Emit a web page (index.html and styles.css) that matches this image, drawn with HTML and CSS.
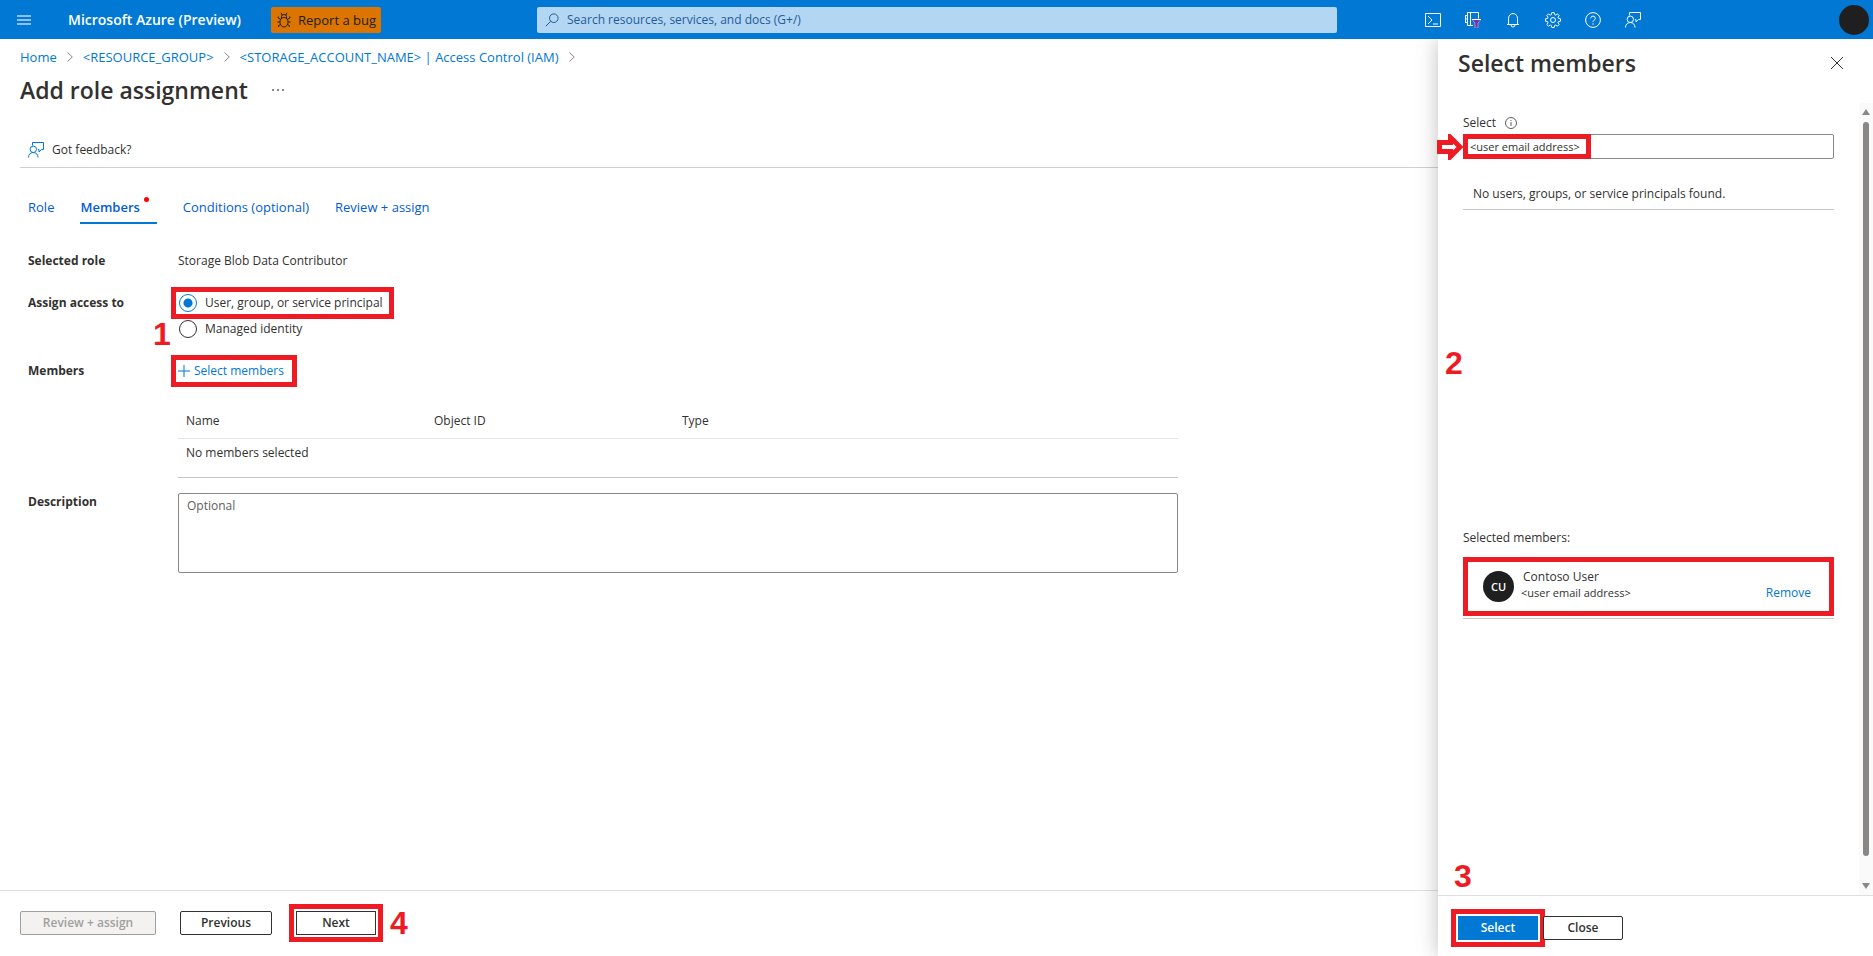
FILE: index.html
```html
<!DOCTYPE html>
<html lang="en">
<head>
  <meta charset="UTF-8">
  <meta name="viewport" content="width=device-width, initial-scale=1.0">
  <title>Add role assignment - Microsoft Azure</title>
  <link rel="stylesheet" href="styles.css">
</head>
<body>
  <svg class="defs" aria-hidden="true">
    <symbol id="feedback" viewBox="0 0 16 16">
      <path d="M4.500 3.500V.5h11v7h-2l-2.500 2.500V7.500H10M.5 15.500c0-3 2-5 4.800-5s4.700 2 4.700 5" />
      <circle cx="5.300" cy="7.300" r="3.200" />
    </symbol>
    <symbol id="chevron" viewBox="0 0 6 10">
      <path d="M.5.500L5.300 5 .5 9.500" />
    </symbol>
  </svg>

  <header class="topbar">
    <button class="menu" aria-label="Show portal menu"><span></span><span></span><span></span></button>
    <a class="brand" href="#">Microsoft Azure (Preview)</a>
    <button class="bug">
      <svg viewBox="0 0 14 16" width="14" height="16">
        <path d="M7 5.500c2.800 0 4 2 4 4.500s-1.500 5-4 5-4-2.500-4-5 1.200-4.500 4-4.500zM4.500 6V4.500a2.500 2 0 0 1 5 0V6M5.200 3L4 .8M8.800 3L10 .8M3.500 7.200L1.200 6V4.500M10.500 7.200L12.800 6V4.500M3 10H.5M11 10h2.500M3.700 12.500l-2 1V15M10.300 12.500l2 1V15" />
      </svg>
      Report a bug
    </button>
    <div class="search">
      <svg viewBox="0 0 14 14" width="14" height="14"><circle cx="8.800" cy="5.200" r="4.300" /><path d="M5.700 8.300L.8 13.200" /></svg>
      <input type="text" aria-label="Search" placeholder="Search resources, services, and docs (G+/)">
    </div>
    <nav class="tools">
      <button aria-label="Cloud Shell">
        <svg viewBox="0 0 16 16" width="16" height="16"><path d="M.5 1.500h15v13H.5zM3 4l4 4-4 4M8 12h5" /></svg>
      </button>
      <button aria-label="Directories and subscriptions">
        <svg viewBox="0 0 16 16" width="16" height="16">
          <path d="M8 13.500H2.500V.5h11v6M5.500.5v13M.5 3.500h2M.5 7h2M.5 10.500h2M.5 3v8" />
          <path class="funnel" d="M7 7.500h9l-3 3.500v5h-3v-5z" />
          <path d="M7 7.500h9" />
        </svg>
      </button>
      <button aria-label="Notifications">
        <svg viewBox="0 0 16 16" width="16" height="16"><path d="M3.500 12.500V6.500a4.500 5 0 0 1 9 0v6M2 12.500h12M6 13a2 2 0 0 0 4 0" /></svg>
      </button>
      <button aria-label="Settings">
        <svg viewBox="0 0 16 16" width="16" height="16">
          <path d="M6.800.6h2.400l.4 2 1.200.5 1.700-1.200 1.700 1.700L13 5.200l.5 1.200 2 .4v2.400l-2 .4-.5 1.200 1.200 1.700-1.700 1.700-1.700-1.200-1.200.5-.4 2H6.800l-.4-2-1.200-.5-1.700 1.200-1.700-1.700L3 10.800l-.5-1.200-2-.4V6.800l2-.4L3 5.200 1.800 3.600l1.700-1.700 1.700 1.200 1.200-.5z" />
          <circle cx="8" cy="8" r="2.500" />
        </svg>
      </button>
      <button aria-label="Help">
        <svg viewBox="0 0 16 16" width="16" height="16"><circle cx="8" cy="8" r="7.400" /><path class="mark" d="M5.700 6.300a2.300 2.200 0 1 1 3.500 1.900C8.300 8.800 8 9.100 8 10M8 11.300v1.400" /></svg>
      </button>
      <button aria-label="Feedback"><svg width="16" height="16"><use href="#feedback" /></svg></button>
    </nav>
    <button class="account" aria-label="Account"></button>
  </header>

  <div class="page">
    <main class="blade">
      <nav class="crumbs" aria-label="Breadcrumb">
        <a href="#">Home</a>
        <svg width="6" height="10"><use href="#chevron" /></svg>
        <a href="#">&lt;RESOURCE_GROUP&gt;</a>
        <svg width="6" height="10"><use href="#chevron" /></svg>
        <a href="#">&lt;STORAGE_ACCOUNT_NAME&gt; | Access Control (IAM)</a>
        <svg width="6" height="10"><use href="#chevron" /></svg>
      </nav>
      <div class="title">
        <h1>Add role assignment</h1>
        <button class="more" aria-label="More"><span></span><span></span><span></span></button>
      </div>
      <div class="commands">
        <button><svg width="16" height="16"><use href="#feedback" /></svg>Got feedback?</button>
      </div>
      <nav class="tabs">
        <a href="#">Role</a>
        <a class="active" href="#">Members</a>
        <a href="#">Conditions (optional)</a>
        <a href="#">Review + assign</a>
      </nav>

      <form class="form" id="assignment">
        <div class="row">
          <span class="label">Selected role</span>
          <span>Storage Blob Data Contributor</span>
        </div>
        <div class="row" role="radiogroup" aria-labelledby="access">
          <span class="label" id="access">Assign access to</span>
          <div class="options">
            <span class="step step-1">1</span>
            <label class="callout"><input type="radio" name="access" checked>User, group, or service principal</label>
            <label><input type="radio" name="access">Managed identity</label>
          </div>
        </div>
        <div class="row">
          <span class="label">Members</span>
          <button class="add callout" type="button">
            <svg viewBox="0 0 12 12" width="12" height="12"><path d="M6 0v12M0 6h12" /></svg>Select members
          </button>
        </div>
        <table class="members">
          <thead>
            <tr><th>Name</th><th>Object ID</th><th>Type</th></tr>
          </thead>
          <tbody>
            <tr><td colspan="3">No members selected</td></tr>
          </tbody>
        </table>
        <div class="row">
          <label class="label" for="description">Description</label>
          <textarea id="description" placeholder="Optional"></textarea>
        </div>
      </form>

      <footer class="actions">
        <button class="btn wide" disabled>Review + assign</button>
        <button class="btn prev">Previous</button>
        <button class="btn callout">Next</button>
        <span class="step">4</span>
      </footer>
    </main>

    <aside class="panel">
      <div class="panel-head">
        <h2>Select members</h2>
        <button class="close" aria-label="Close">
          <svg viewBox="0 0 12 12" width="12" height="12"><path d="M0 0l12 12M12 0L0 12" /></svg>
        </button>
      </div>
      <div class="panel-scroll">
        <div class="panel-body">
          <label class="field-label" for="member">Select
            <svg viewBox="0 0 12 12" width="12" height="12"><circle cx="6" cy="6" r="5.500" /><path d="M6 5v4M6 3v1" /></svg>
          </label>
          <div class="field">
            <svg class="arrow" viewBox="0 0 26 26" width="26" height="26"><path d="M2.500 8.500h11V3.500L23 13l-9.500 9.500v-5h-11z" /></svg>
            <span class="field-mark"></span>
            <input id="member" type="text" value="&lt;user email address&gt;">
          </div>
          <p class="empty">No users, groups, or service principals found.</p>
          <div class="results"><span class="step step-2">2</span></div>
          <p class="selected-label">Selected members:</p>
          <div class="selected">
            <div class="person">
              <span class="initials">CU</span>
              <div class="details">
                <span class="name">Contoso User</span>
                <span class="mail">&lt;user email address&gt;</span>
              </div>
              <a class="remove" href="#">Remove</a>
            </div>
          </div>
        </div>
        <div class="scrollbar" aria-hidden="true">
          <svg viewBox="0 0 8 6" width="8" height="6"><path d="M4 0l4 6H0z" /></svg>
          <span class="thumb"></span>
          <svg viewBox="0 0 8 6" width="8" height="6"><path d="M0 0h8L4 6z" /></svg>
        </div>
      </div>
      <footer class="panel-actions">
        <span class="step step-3">3</span>
        <button class="btn primary callout">Select</button>
        <button class="btn">Close</button>
      </footer>
    </aside>
  </div>
</body>
</html>
```

FILE: styles.css
```css
* {
  box-sizing: border-box;
  margin: 0;
  padding: 0;
}
html, body {height: 100%;}
body {
  display: flex;
  flex-direction: column;
  overflow: hidden;
  background: #fff;
  color: #323130;
  font: 12px/18px "Open Sans", "Noto Sans", sans-serif;
}
button, input, textarea {
  font: inherit;
  color: inherit;
}
button {
  border: 0;
  background: none;
}
a {
  color: #0078d4;
  text-decoration: none;
}
svg {
  flex: none;
  fill: none;
  stroke: currentColor;
}
.defs {
  position: absolute;
  width: 0;
  height: 0;
}

/* top bar */
.topbar {
  display: flex;
  align-items: center;
  height: 39px;
  flex: none;
  padding: 0 4px 0 17px;
  background: #0078d4;
  color: #fff;
}
.menu {
  display: grid;
  gap: 2px;
  width: 14px;
  margin-right: 37px;
}
.menu span {
  height: 2px;
  background: #8cc1ec;
}
.brand {
  width: 203px;
  color: #fff;
  font-size: 14px;
  font-weight: 600;
  white-space: nowrap;
}
.bug {
  display: flex;
  align-items: center;
  gap: 7px;
  width: 110px;
  height: 26px;
  padding-left: 6px;
  border-radius: 2px;
  background: #db7500;
  color: #201f1e;
  font-size: 13px;
  white-space: nowrap;
}
.search {
  display: flex;
  align-items: center;
  gap: 8px;
  flex: 0 1 800px;
  height: 26px;
  margin-left: 156px;
  padding: 0 8px;
  border-radius: 2px;
  background: #b3d6f2;
  color: #1f5c99;
}
.search input {
  flex: 1;
  border: 0;
  background: none;
}
.search input::placeholder {color: #1f5c99;}
.tools {
  display: flex;
  margin-left: 76px;
}
.tools button {
  display: grid;
  place-items: center;
  width: 40px;
  height: 38px;
}
.funnel {
  fill: #7f2aa8;
  stroke: #e6d8f2;
  stroke-width: 0.5px;
}
.account {
  width: 30px;
  height: 30px;
  margin-left: auto;
  border-radius: 50%;
  background: #1f1f1f;
}

/* blade */
.page {
  display: flex;
  flex: 1;
  min-height: 0;
}
.blade {
  display: flex;
  flex-direction: column;
  flex: 1;
  min-width: 0;
}
.crumbs {
  display: flex;
  align-items: center;
  gap: 10px;
  padding: 9px 20px 0;
  font-size: 13px;
}
.crumbs svg {color: #8a8886;}
.title {
  display: flex;
  align-items: center;
  gap: 24px;
  padding: 8px 20px 0;
}
h1, h2 {
  font-size: 23px;
  line-height: 32px;
  font-weight: 600;
}
.more {
  display: flex;
  gap: 3px;
}
.more span {
  width: 2px;
  height: 2px;
  background: #8a8886;
}
.commands {
  margin-left: 20px;
  padding: 35px 8px 8px;
  border-bottom: 1px solid #d2d0ce;
}
.commands button {
  display: flex;
  align-items: center;
  gap: 8px;
}
.commands svg {color: #0078d4;}
.tabs {
  display: flex;
  gap: 26px;
  padding: 27px 28px 0;
  font-size: 13px;
}
.tabs a {
  position: relative;
  height: 29px;
  color: #015cda;
  line-height: 24px;
}
.tabs .active {
  padding-right: 17px;
  border-bottom: 2px solid #0078d4;
  font-weight: 600;
}
.tabs .active::after {
  content: "";
  position: absolute;
  top: 2px;
  right: 8px;
  width: 5px;
  height: 5px;
  border-radius: 50%;
  background: #f00;
}

.form {
  flex: 1;
  padding: 28px 28px 0;
}
.row {
  display: grid;
  grid-template-columns: 150px minmax(0, 1000px);
  justify-items: start;
  margin-bottom: 24px;
}
.label {font-weight: 700;}
.options {
  position: relative;
  display: grid;
  gap: 8px;
  justify-items: start;
}
.options label {
  display: flex;
  align-items: center;
  gap: 8px;
}
.options input {
  appearance: none;
  width: 18px;
  height: 18px;
  margin-left: 1px;
  border: 1px solid #323130;
  border-radius: 50%;
}
.options input:checked {
  border-color: #0078d4;
  background: radial-gradient(circle, #0078d4 4px, transparent 5px);
}
.options .callout {padding-right: 4px;}
.add {
  display: flex;
  align-items: center;
  gap: 4px;
  padding-right: 6px;
  color: #0078d4;
}
.members {
  width: calc(100% - 150px);
  max-width: 1000px;
  margin-left: 150px;
  table-layout: fixed;
  border-collapse: collapse;
  border-bottom: 1px solid #c8c6c4;
  text-align: left;
}
.members th {
  width: 248px;
  padding: 8px;
  border-bottom: 1px solid #e6e6e6;
  font-weight: 500;
}
.members th:last-child {width: auto;}
.members td {padding: 5px 8px 15px;}
.form textarea {
  display: block;
  width: 100%;
  height: 80px;
  padding: 3px 8px;
  border: 1px solid #8a8886;
  border-radius: 2px;
  resize: none;
}
.members + .row {margin-top: 15px;}
textarea::placeholder {color: #605e5c;}

/* buttons */
.btn {
  min-width: 80px;
  height: 24px;
  border: 1px solid #323130;
  border-radius: 2px;
  background: #fff;
  font-weight: 600;
  line-height: 20px;
}
.btn:disabled {
  border-color: #a19f9d;
  background: #f3f2f1;
  color: #a19f9d;
}
.primary {
  border-color: #0078d4;
  background: #0078d4;
  color: #fff;
}
.wide {width: 136px;}
.prev {width: 92px;}
.actions {
  display: flex;
  align-items: center;
  gap: 24px;
  height: 66px;
  padding: 0 20px 2px;
  border-top: 1px solid #e1dfdd;
}
.actions .step {margin-left: -10px;}

/* numbered steps and frames */
.step {
  color: #ed1c24;
  font: bold 32px/32px "Liberation Sans", Arial, sans-serif;
}
.step-1, .step-2, .step-3 {position: absolute;}
.step-1 {
  top: 24px;
  left: -25px;
}
.step-2 {
  bottom: 150px;
  left: -18px;
}
.step-3 {
  top: -36px;
  left: 16px;
}
.callout {
  border-radius: 0;
  outline: 5px solid #ed1c24;
  outline-offset: 2px;
}

/* side panel */
.panel {
  display: flex;
  flex-direction: column;
  flex: 0 0 435px;
  background: #fff;
  box-shadow: 0 0 20px rgba(0, 0, 0, 0.25);
  clip-path: inset(0 0 0 -40px);
}
.panel-head {
  display: flex;
  align-items: center;
  justify-content: space-between;
  padding: 8px 30px 0 20px;
}
.close {
  display: flex;
}
.panel-scroll {
  display: flex;
  flex: 1;
  margin-top: 24px;
}
.panel-body {
  flex: 1;
  padding: 11px 25px 0;
}
.field-label {
  display: flex;
  align-items: center;
  gap: 9px;
}
.field-label svg {color: #605e5c;}
.field {
  position: relative;
  margin-top: 2px;
}
.field input {
  display: block;
  width: 100%;
  height: 25px;
  padding: 0 6px;
  border: 1px solid #8a8886;
  border-radius: 2px;
}
.field input, .mail {font-size: 11px;}
.field-mark {
  position: absolute;
  top: 0;
  left: 0;
  width: 128px;
  height: 25px;
  border: 5px solid #ed1c24;
}
.arrow {
  position: absolute;
  left: -26px;
  color: #ed1c24;
  fill: #fff;
  stroke-width: 5px;
}
.empty {
  padding: 26px 10px 6px;
  border-bottom: 1px solid #c8c6c4;
}
.results {
  position: relative;
  height: 319px;
}
.selected {
  margin-top: 10px;
  padding-bottom: 2px;
  border-bottom: 1px solid #c8c6c4;
}
.person {
  display: flex;
  align-items: center;
  gap: 7px;
  height: 59px;
  padding: 0 18px 0 15px;
  border: 5px solid #ed1c24;
}
.initials {
  width: 31px;
  height: 31px;
  border-radius: 50%;
  background: #1f1f1f;
  color: #fff;
  font-size: 11px;
  font-weight: 600;
  line-height: 31px;
  text-align: center;
}
.details {
  display: grid;
  flex: 1;
  padding-bottom: 4px;
  line-height: 16px;
}
.name {padding-left: 2px;}
.remove {padding-top: 13px;}
.scrollbar {
  display: flex;
  flex-direction: column;
  align-items: center;
  gap: 7px;
  width: 14px;
  padding: 6px 0;
  background: #fafafa;
}
.scrollbar svg {
  fill: #8a8886;
  stroke: none;
}
.thumb {
  flex: 1;
  width: 6px;
  margin-bottom: 20px;
  border-radius: 3px;
  background: #8a8886;
}
.panel-actions {
  position: relative;
  display: flex;
  align-items: center;
  gap: 5px;
  height: 61px;
  padding: 4px 20px 0;
  border-top: 1px solid #e1dfdd;
}
```
